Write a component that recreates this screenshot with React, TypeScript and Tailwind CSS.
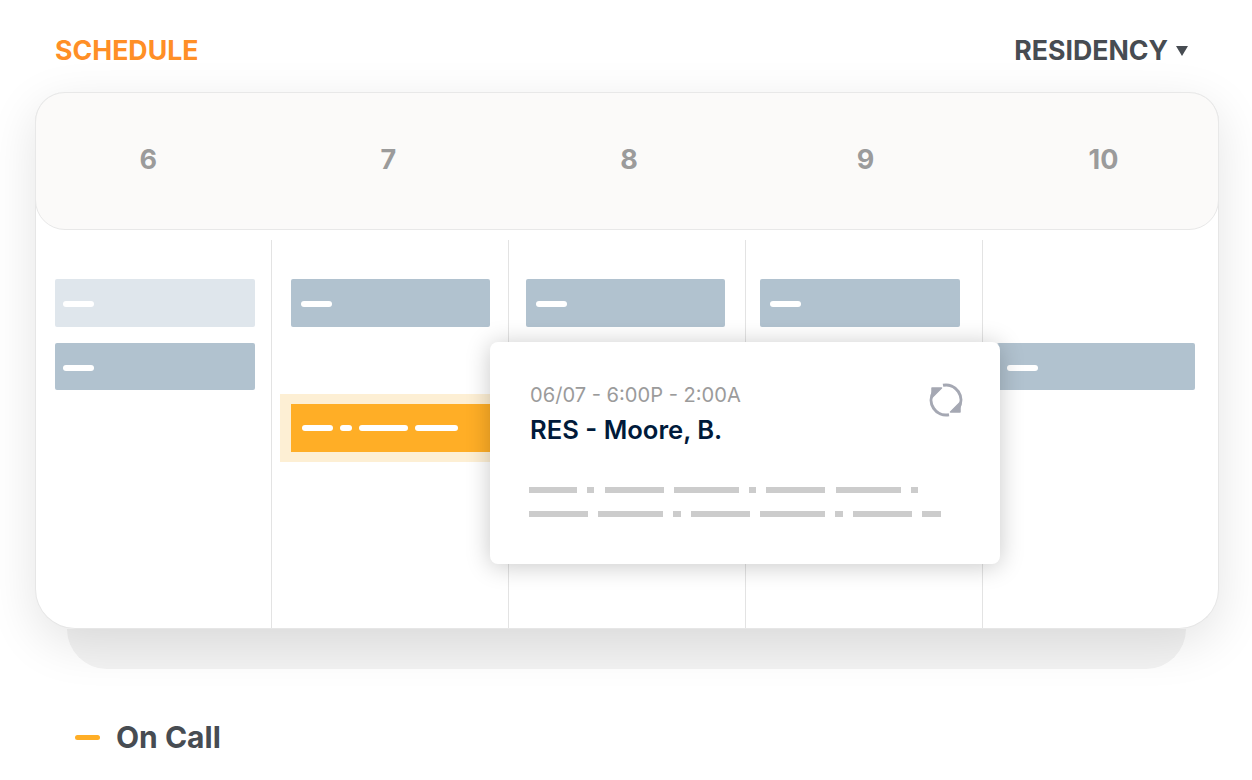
const columns = [
  { label: '6', width: 'w-[225px]' },
  { label: '7', width: 'w-[256px]' },
  { label: '8', width: 'w-[226px]' },
  { label: '9', width: 'w-[248px]' },
  { label: '10', width: 'w-[228.5px]' },
];

const firstLine = ['w-[48px]', 'w-[7px]', 'w-[59px]', 'w-[65px]', 'w-[7px]', 'w-[59px]', 'w-[65px]', 'w-[7px]'];
const secondLine = ['w-[59px]', 'w-[65px]', 'w-[8px]', 'w-[59px]', 'w-[65px]', 'w-[8px]', 'w-[59px]', 'w-[19px]'];

function Shift({ light, size = 'h-[48px] w-[199px] pl-[10px]' }: { light?: boolean; size?: string }) {
  return (
    <div className={`rounded-[2px] pt-[21.5px] ${size} ${light ? 'bg-[#dfe6ec]' : 'bg-[#b1c2cf]'}`}>
      <div className="h-[6px] w-[31px] rounded-full bg-white" />
    </div>
  );
}

function SwapIcon() {
  return (
    <svg viewBox="0 0 40 40" className="h-[40px] w-[40px] text-[#a5a8b3]" fill="none" stroke="currentColor" strokeLinejoin="round">
      <path d="M17 5.3A15 15 0 0 1 32.5 28.2" strokeWidth="3" />
      <path d="M23 34.7A15 15 0 0 1 7.5 11.8" strokeWidth="3" />
      <path d="M34 32H24.5L34 22.5Z" fill="currentColor" strokeWidth="1.5" />
      <path d="M6 8H15.5L6 17.5Z" fill="currentColor" strokeWidth="1.5" />
    </svg>
  );
}

export default function App() {
  return (
    <div className="h-[780px] w-[1252px] overflow-hidden bg-white font-['Inter',sans-serif]">
      <div className="flex h-[92px] items-start justify-between pl-[55px] pr-[64px] pt-[34px] text-[26.7px] leading-[32px] font-bold">
        <span className="text-[#ff8f26]">SCHEDULE</span>
        <span className="flex items-center gap-[8px] text-[#474c52]">
          RESIDENCY
          <svg viewBox="0 0 12 10" className="mt-[1px] h-[10px] w-[12px]" fill="currentColor">
            <path d="M0 0H12L6 10Z" />
          </svg>
        </span>
      </div>

      <div className="relative z-10 mx-[35px] h-[537px] w-[1183.5px] rounded-t-[30px] rounded-b-[40px] border border-t-0 border-[#e6e6e6] bg-white shadow-[0_14px_50px_rgba(0,0,0,0.11)]">
        <div className="-mx-px flex h-[138px] items-center rounded-[30px] border border-[#e8e8e8] bg-[#fbfaf9] pb-[1px] text-[27px] font-bold text-[#9b9b9b]">
          {columns.map((c) => (
            <div key={c.label} className={`${c.width} text-center`}>{c.label}</div>
          ))}
        </div>

        <div className="mt-[10px] grid h-[388px] grid-cols-[235px_237px_237px_237px_1fr]">
          <div className="flex flex-col gap-[16px] pl-[19px] pt-[39px]">
            <Shift light size="h-[48px] w-[200px] pl-[8px]" />
            <Shift size="h-[47px] w-[200px] pl-[8px]" />
          </div>
          <div className="border-l border-[#e3e3e3] pt-[39px]">
            <div className="pl-[19px]"><Shift /></div>
            <div className="mt-[67px] ml-[8px] h-[68px] w-[240px] bg-[#fdefd4] py-[10px] pl-[11px]">
              <div className="flex h-[48px] w-[229px] items-center gap-[7px] bg-[#ffae26] pl-[11px]">
                <div className="h-[6px] w-[31px] rounded-full bg-white" />
                <div className="h-[6px] w-[12px] rounded-full bg-white" />
                <div className="h-[6px] w-[49px] rounded-full bg-white" />
                <div className="h-[6px] w-[43px] rounded-full bg-white" />
              </div>
            </div>
          </div>
          <div className="border-l border-[#e3e3e3] pl-[17px] pt-[39px]">
            <Shift />
          </div>
          <div className="border-l border-[#e3e3e3] pl-[14px] pt-[39px]">
            <Shift size="h-[48px] w-[200px] pl-[10px]" />
          </div>
          <div className="border-l border-[#e3e3e3] pl-[14px] pt-[103px]">
            <Shift size="h-[47px] w-[198px] pl-[10px]" />
          </div>
        </div>

        {/* detail popover sits over the shifts */}
        <div className="absolute left-[454px] top-[250px] h-[222px] w-[510px] rounded-[8px] bg-white pl-[40px] pt-[40px] shadow-[0_2px_24px_rgba(0,0,0,0.22)]">
          <div className="text-[20.1px] leading-[26px] text-[#9b9b9b]">06/07 - 6:00P - 2:00A</div>
          <div className="mt-[7px] text-[25.6px] leading-[30px] font-semibold text-[#001a3a]">RES - Moore, B.</div>
          <div className="absolute right-[34px] top-[38px]"><SwapIcon /></div>
          <div className="mt-[42px] -ml-px flex gap-[10.3px]">
            {firstLine.map((w, i) => (
              <div key={i} className={`h-[6px] bg-[#cccccc] ${w}`} />
            ))}
          </div>
          <div className="mt-[18px] -ml-px flex gap-[10px]">
            {secondLine.map((w, i) => (
              <div key={i} className={`h-[6px] bg-[#cccccc] ${w}`} />
            ))}
          </div>
        </div>
      </div>

      <div className="mx-[67px] h-[40px] w-[1119px] rounded-b-[40px] bg-[#f3f3f3]" />

      <div className="flex items-center gap-[16px] pl-[75px] pt-[49px] text-[30px] leading-[38px] font-bold text-[#474c52]">
        <div className="h-[5px] w-[25px] rounded-full bg-[#ffae26]" />
        On Call
      </div>
    </div>
  );
}
